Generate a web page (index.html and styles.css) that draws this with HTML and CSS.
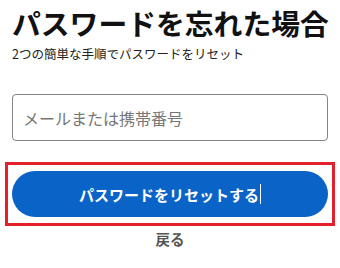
FILE: index.html
```html
<!DOCTYPE html>
<html lang="ja">
<head>
<meta charset="utf-8">
<link rel="stylesheet" href="styles.css">
</head>
<body>
<main class="page">
  <h1 class="title">パスワードを忘れた場合</h1>
  <p class="subtitle">2つの簡単な手順でパスワードをリセット</p>
  <div class="field">メールまたは携帯番号</div>
  <div class="highlight">
    <button class="btn">パスワードをリセットする<span class="caret"></span></button>
  </div>
  <a class="back">戻る</a>
</main>
</body>
</html>
```
FILE: styles.css
```css
* { box-sizing: border-box; }
html, body { margin: 0; background: #fff; }
body {
  font-family: "Noto Sans CJK JP", "Noto Sans", sans-serif;
  width: 340px;
  height: 268px;
  overflow: hidden;
}
.page {
  display: flex;
  flex-direction: column;
  padding: 4px 12px 0 12px;
}
.title {
  margin: 0;
  font-size: 28.8px;
  font-weight: 700;
  line-height: 38px;
  color: #111;
  letter-spacing: 0;
  white-space: nowrap;
}
.subtitle {
  margin: 3px 0 0 0;
  font-size: 12.5px;
  line-height: 18px;
  color: #222;
}
.field {
  margin-top: 31px;
  height: 47px;
  border: 1px solid #858585;
  border-radius: 4px;
  padding: 0 10px;
  display: flex;
  align-items: center;
  font-size: 16px;
  color: #767676;
}
.highlight {
  margin: 21px -7px 0 -7px;
  border: 3px solid #e3202b;
  padding: 6px 4px 6px 4px;
}
.btn {
  width: 100%;
  height: 46px;
  border: none;
  border-radius: 23px;
  background: #0a63c6;
  color: #fff;
  font-family: inherit;
  font-size: 15px;
  font-weight: 700;
  display: flex;
  align-items: center;
  justify-content: center;
  padding: 0;
}
.caret {
  display: inline-block;
  width: 1px;
  height: 20px;
  background: #fff;
  margin-left: 1px;
}
.back {
  align-self: center;
  margin-top: 3px;
  font-size: 14.5px;
  font-weight: 700;
  color: #555;
  line-height: 20px;
}
```
